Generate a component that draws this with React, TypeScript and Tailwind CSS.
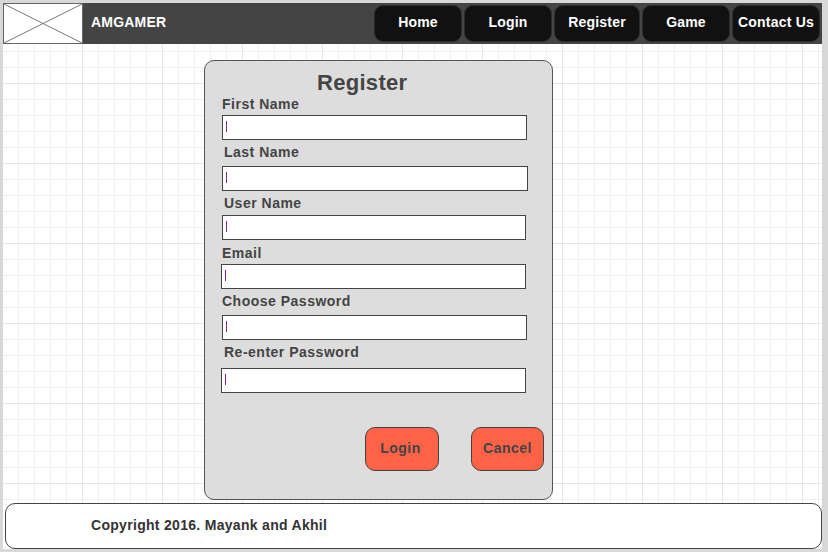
const NAV = [
  { label: "Home", w: "w-[88px]" },
  { label: "Login", w: "w-[88px]" },
  { label: "Register", w: "w-[86px]" },
  { label: "Game", w: "w-[88px]" },
  { label: "Contact Us", w: "w-[88px]" },
];

// offsets read off the mockup, each row is a bit crooked
const FIELDS = [
  { label: "First Name", lbl: "mt-0 ml-[17px]", box: "mt-[3px] ml-[17px] w-[305px]" },
  { label: "Last Name", lbl: "mt-[4px] ml-[19px]", box: "mt-[6px] ml-[17px] w-[306px]" },
  { label: "User Name", lbl: "mt-[4px] ml-[19px]", box: "mt-[4px] ml-[17px] w-[304px]" },
  { label: "Email", lbl: "mt-[5px] ml-[17px]", box: "mt-[3px] ml-[16px] w-[305px]" },
  { label: "Choose Password", lbl: "mt-[4px] ml-[17px]", box: "mt-[6px] ml-[17px] w-[305px]" },
  { label: "Re-enter Password", lbl: "mt-[4px] ml-[19px]", box: "mt-[8px] ml-[16px] w-[305px]" },
];

function LogoPlaceholder() {
  return (
    <div className="h-[41px] w-[80px] shrink-0 border border-[#666] bg-white">
      <svg width="78" height="39" viewBox="0 0 78 39" className="block">
        <line x1="0" y1="0" x2="78" y2="39" stroke="#777" strokeWidth="1" />
        <line x1="78" y1="0" x2="0" y2="39" stroke="#777" strokeWidth="1" />
      </svg>
    </div>
  );
}

function Header() {
  return (
    <header className="flex h-[41px] shrink-0">
      <LogoPlaceholder />
      <div className="flex flex-1 items-start bg-[#444] pt-[2px] pr-[2px]">
        <span className="mt-[9px] ml-[8px] text-[14px] leading-[16px] font-bold tracking-[0.2px] text-white">AMGAMER</span>
        <nav className="ml-auto flex gap-[2px]">
          {NAV.map((n) => (
            <a
              key={n.label}
              className={`${n.w} flex h-[37px] items-center justify-center rounded-[9px] border border-[#2c2c2c] bg-[#111] pb-[2px] text-[14px] font-bold tracking-[0.2px] text-white`}
            >
              {n.label}
            </a>
          ))}
        </nav>
      </div>
    </header>
  );
}

function Field({ label, lbl, box }: { label: string; lbl: string; box: string }) {
  return (
    <>
      <label className={`${lbl} block text-[14px] leading-[16px] font-bold tracking-[0.5px] text-[#444]`}>{label}</label>
      <div className={`${box} relative h-[25px] border border-[#444] bg-white`}>
        <span className="absolute top-[5px] left-[3px] h-[11px] w-px bg-[#8a2a8a]" />
      </div>
    </>
  );
}

function RegisterPanel() {
  return (
    <section className="mt-[16px] ml-[201px] flex h-[440px] w-[349px] flex-col rounded-[10px] border border-[#555] bg-[#ddd]">
      <h1 className="mt-[9px] pl-[112px] text-[22px] leading-[26px] font-bold tracking-[0.3px] text-[#444]">Register</h1>
      {FIELDS.map((f) => (
        <Field key={f.label} {...f} />
      ))}
      <div className="mt-[34px] flex">
        <button className="ml-[160px] h-[44px] w-[74px] rounded-[10px] border border-[#444] bg-[#ff6347] pr-[3px] pb-[2px] text-[14px] font-bold tracking-[0.5px] text-[#444]">
          Login
        </button>
        <button className="ml-[32px] h-[44px] w-[73px] rounded-[10px] border border-[#444] bg-[#ff6347] pb-[2px] text-[14px] font-bold tracking-[0.5px] text-[#444]">
          Cancel
        </button>
      </div>
    </section>
  );
}

export default function App() {
  return (
    <div className="h-[552px] w-[828px] bg-[#d8d8d8] pt-[3px] pr-[6px] pb-[3px] pl-[3px] font-['Liberation_Sans',Arial,sans-serif]">
      <div className="flex h-full flex-col bg-white bg-[image:linear-gradient(to_right,#e6e6e6_1px,transparent_1px),linear-gradient(to_bottom,#e6e6e6_1px,transparent_1px),linear-gradient(to_right,#f1f1f1_1px,transparent_1px),linear-gradient(to_bottom,#f1f1f1_1px,transparent_1px)] bg-[size:80px_80px,80px_80px,16px_16px,16px_16px] bg-[position:-1px_0,-1px_0,-1px_0,-1px_0]">
        <Header />
        <RegisterPanel />
        <footer className="mt-[3px] ml-[2px] flex h-[46px] items-center rounded-[10px] border border-[#444] bg-white pb-[1px] pl-[85px]">
          <span className="text-[14px] font-bold tracking-[0.3px] text-[#333]">Copyright 2016. Mayank and Akhil</span>
        </footer>
      </div>
    </div>
  );
}
